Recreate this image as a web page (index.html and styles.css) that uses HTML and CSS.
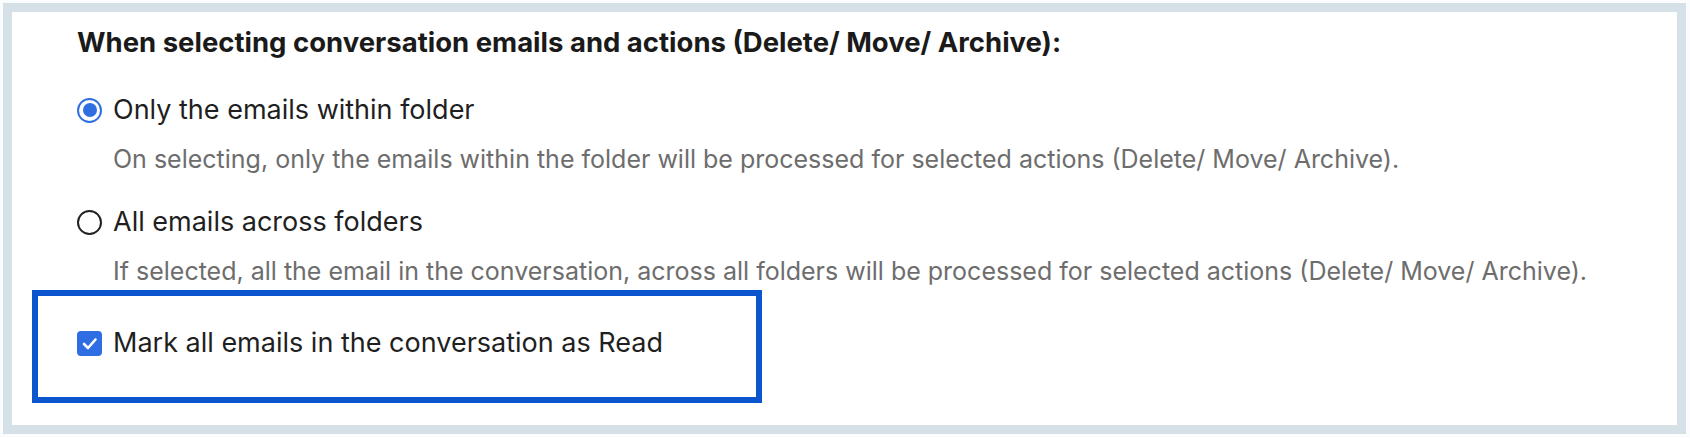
FILE: index.html
```html
<!DOCTYPE html>
<html lang="en">
<head>
    <meta charset="UTF-8">
    <meta name="viewport" content="width=device-width, initial-scale=1.0">
    <title>Conversation settings</title>
    <link rel="stylesheet" href="styles.css">
</head>
<body>
    <div class="settings-panel">
        <h2 class="section-title">When selecting conversation emails and actions (Delete/ Move/ Archive):</h2>

        <div class="option">
            <label class="option-row">
                <span class="radio checked"></span>
                <span class="option-label">Only the emails within folder</span>
            </label>
            <p class="option-desc">On selecting, only the emails within the folder will be processed for selected actions (Delete/ Move/ Archive).</p>
        </div>

        <div class="option">
            <label class="option-row">
                <span class="radio"></span>
                <span class="option-label">All emails across folders</span>
            </label>
            <p class="option-desc">If selected, all the email in the conversation, across all folders will be processed for selected actions (Delete/ Move/ Archive).</p>
        </div>

        <div class="highlight">
            <label class="option-row">
                <span class="checkbox">
                    <svg viewBox="0 0 25 25">
                        <polyline points="7,13 11,17 18.5,8.5" fill="none" stroke="#fff" stroke-width="2.6" stroke-linecap="round" stroke-linejoin="round"/>
                    </svg>
                </span>
                <span class="option-label">Mark all emails in the conversation as Read</span>
            </label>
        </div>
    </div>
</body>
</html>
```
FILE: styles.css
```css
body {
    margin: 0;
    background-color: #fbfcfd;
    font-family: Inter, "Noto Sans", sans-serif;
}

.settings-panel {
    margin: 3px 4px 4px 3px;
    height: 431px;
    box-sizing: border-box;
    border: 9px solid #d6e0e7;
    background-color: #fff;
    padding: 13px 0 0 65px;
}

.section-title {
    margin: 0 0 34px 0;
    font-size: 27.5px;
    line-height: 34px;
    font-weight: 700;
    color: #1a1a1a;
}

.option {
    margin-bottom: 30px;
}

.option-row {
    display: flex;
    align-items: center;
    gap: 11px;
    height: 34px;
    cursor: pointer;
}

.option-label {
    font-size: 27px;
    line-height: 34px;
    color: #1f1f1f;
}

.option-desc {
    margin: 16px 0 0 36px;
    font-size: 25px;
    line-height: 32px;
    color: #6d6d6d;
}

.radio {
    flex: none;
    width: 25px;
    height: 25px;
    box-sizing: border-box;
    border: 2px solid #222;
    border-radius: 50%;
    display: flex;
    align-items: center;
    justify-content: center;
}

.radio.checked {
    border: 2.5px solid #2f6fe0;
}

.radio.checked::after {
    content: "";
    width: 14px;
    height: 14px;
    border-radius: 50%;
    background-color: #2f6fe0;
}

.checkbox {
    flex: none;
    width: 25px;
    height: 25px;
    border-radius: 4px;
    background-color: #2f6ee2;
}

.checkbox svg {
    display: block;
    width: 25px;
    height: 25px;
}

.highlight {
    margin: -27px 0 0 -45px;
    width: 730px;
    height: 113px;
    box-sizing: border-box;
    border: 6px solid #0b55cf;
    padding: 30px 0 0 39px;
}
```
